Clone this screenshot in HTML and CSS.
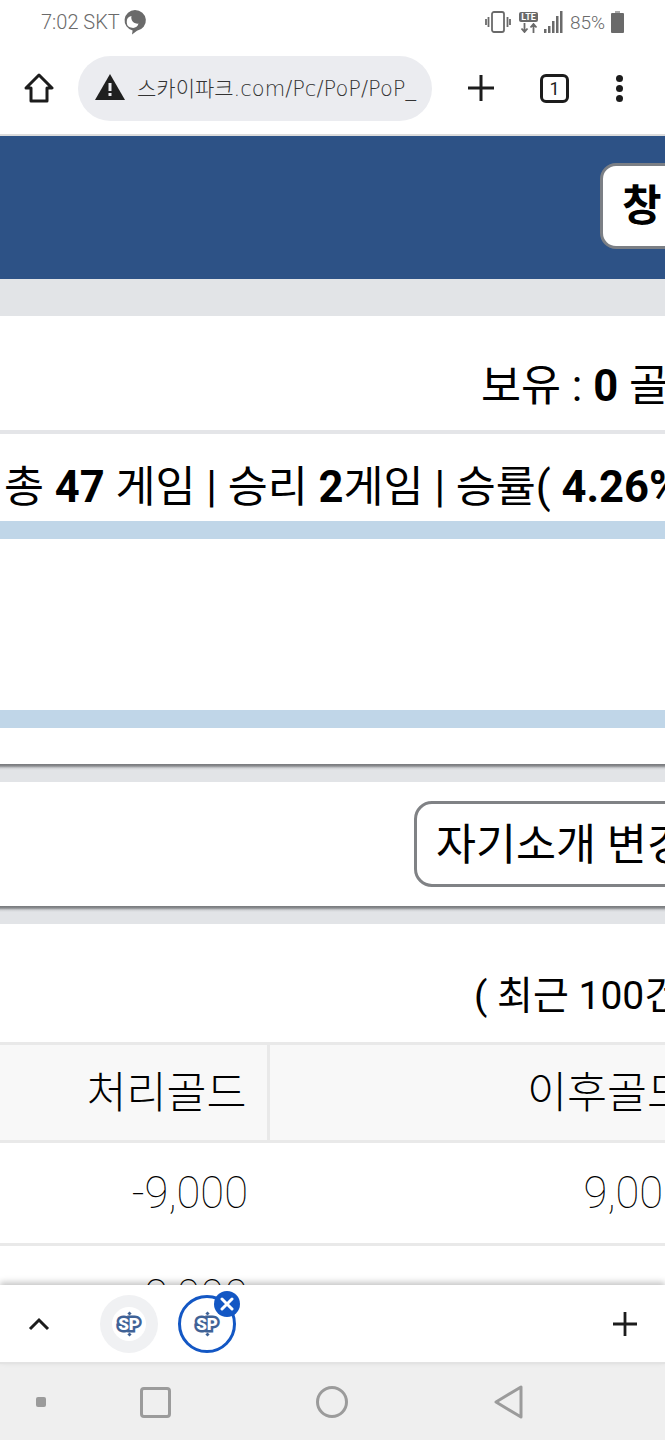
FILE: index.html
```html
<!DOCTYPE html>
<html lang="ko">
<head>
  <meta charset="UTF-8">
  <meta name="viewport" content="width=device-width, initial-scale=1.0">
  <title>스카이파크</title>
  <link rel="stylesheet" href="styles.css">
</head>
<body>

<div class="phone">
  <div class="status-bar">
    <div class="status-left">
      <span>7:02 SKT</span>
      <svg class="talk-icon" width="24" height="26" viewBox="0 0 24 26">
        <path d="M12 1a11 10.500 0 0 1 2 20.800L9 25.500l.6-3.900A11 10.500 0 0 1 12 1z" fill="#6a6a6a"/>
        <path d="M15.500 14.500a6 6 0 0 1-7-7.500 6 6 0 1 0 7 7.500z" fill="#fff"/>
      </svg>
    </div>
    <div class="status-right">
      <svg width="26" height="24" viewBox="0 0 26 24" fill="none" stroke="#6a6a6a" stroke-width="1.800">
        <rect x="7" y="2" width="12" height="20" rx="2"/>
        <path d="M3.500 7v10M1 9v6M22.500 7v10M25 9v6"/>
      </svg>
      <div class="lte">
        <span class="lte-badge">LTE</span>
        <svg width="18" height="10" viewBox="0 0 18 10" fill="none" stroke="#6a6a6a" stroke-width="1.800">
          <path d="M4.500 0v8M1.500 5.500l3 3.500 3-3.500M13.500 10V2M10.500 4.500l3-3.500 3 3.500"/>
        </svg>
      </div>
      <svg width="20" height="22" viewBox="0 0 20 22" fill="#6a6a6a">
        <rect x="0" y="18" width="2.500" height="4"/>
        <rect x="4" y="15" width="2.500" height="7"/>
        <rect x="8" y="10" width="2.500" height="12"/>
        <rect x="12" y="5" width="2.500" height="17"/>
        <rect x="16" y="0" width="2.500" height="22"/>
      </svg>
      <span class="battery-text">85%</span>
      <svg width="13" height="22" viewBox="0 0 13 22" fill="#6a6a6a">
        <rect x="4" y="0" width="5" height="2" fill="#a8a8a8"/>
        <rect x="0" y="2" width="13" height="20" rx="1"/>
      </svg>
    </div>
  </div>

  <div class="toolbar">
    <svg class="home-icon" width="30" height="30" viewBox="0 0 30 30" fill="none" stroke="#1c1c1c" stroke-width="3" stroke-linejoin="round">
      <path d="M2 15L15 2l13 13h-5v13H7V15z"/>
    </svg>
    <div class="url-pill">
      <svg width="30" height="26" viewBox="0 0 30 26">
        <path d="M15 0l15 26H0z" fill="#1f1f1f"/>
        <rect x="13.500" y="9" width="3" height="8" fill="#ebecf0"/>
        <rect x="13.500" y="19" width="3" height="3" fill="#ebecf0"/>
      </svg>
      <span class="url-text">스카이파크.com/Pc/PoP/PoP_</span>
    </div>
    <svg class="plus-icon" width="28" height="28" viewBox="0 0 28 28" stroke="#1c1c1c" stroke-width="3">
      <path d="M14 1v26M1 14h26"/>
    </svg>
    <span class="tab-count">1</span>
    <div class="dots"><i></i><i></i><i></i></div>
  </div>

  <div class="content">
    <div class="wide">
      <div class="blue-head">
        <button class="head-btn">창</button>
      </div>
      <div class="gap-band"></div>

      <div class="gold-row">보유 : <b>0</b> 골드</div>
      <div class="stats-row">총 <b>47</b> 게임 | 승리 <b>2</b>게임 | 승률( <b>4.26%</b> )</div>
      <div class="strip"></div>
      <div class="intro-empty"></div>
      <div class="strip"></div>
      <div class="intro-foot"></div>

      <div class="band-shadow"></div>
      <div class="btn-row">
        <button class="intro-btn">자기소개 변경</button>
      </div>
      <div class="band-shadow"></div>

      <div class="recent">( 최근 100건 )</div>
      <table class="gold-table">
        <tr>
          <th class="col-gold">처리골드</th>
          <th class="col-after">이후골드</th>
        </tr>
        <tr>
          <td>-9,000</td>
          <td>9,000</td>
        </tr>
        <tr>
          <td>-9,000</td>
          <td>0</td>
        </tr>
      </table>
    </div>
  </div>

  <div class="tab-strip">
    <svg class="chev" width="22" height="14" viewBox="0 0 22 14" fill="none" stroke="#1c1c1c" stroke-width="3">
      <path d="M2 12l9-9 9 9"/>
    </svg>
    <div class="tab-circle inactive">
      <span class="logo-bg"><span class="sp-logo">SP</span></span>
    </div>
    <div class="tab-circle active">
      <span class="sp-logo">SP</span>
      <span class="close-badge">
        <svg width="14" height="14" viewBox="0 0 14 14" stroke="#fff" stroke-width="3" stroke-linecap="round"><path d="M2 2l10 10M12 2L2 12"/></svg>
      </span>
    </div>
    <svg class="tab-plus" width="24" height="24" viewBox="0 0 24 24" stroke="#1c1c1c" stroke-width="2.800">
      <path d="M12 0v24M0 12h24"/>
    </svg>
  </div>

  <div class="nav-bar">
    <span class="nav-dot"></span>
    <span class="nav-square"></span>
    <span class="nav-circle"></span>
    <svg class="nav-back" width="32" height="34" viewBox="0 0 32 34" fill="none" stroke="#9b9b9b" stroke-width="3" stroke-linejoin="round">
      <path d="M28 2v30L3 17z"/>
    </svg>
  </div>
</div>

</body>
</html>
```

FILE: styles.css
```css
* {
  box-sizing: border-box;
}
body {
  margin: 0;
  background: #fff;
  color: #000;
  font-family: Roboto, "Noto Sans CJK KR", sans-serif;
}
.phone {
  width: 665px;
  height: 1440px;
  display: flex;
  flex-direction: column;
  overflow: hidden;
}

/* status bar */
.status-bar {
  height: 44px;
  flex: none;
  display: flex;
  justify-content: space-between;
  align-items: center;
  padding: 0 41px;
  color: #6a6a6a;
  font-size: 20px;
  font-weight: 300;
}
.status-left, .status-right {
  display: flex;
  align-items: center;
}
.talk-icon {
  margin-left: 3px;
}
.status-right {
  gap: 6px;
}
.battery-text {
  font-size: 19px;
}
.lte {
  display: flex;
  flex-direction: column;
  align-items: center;
  gap: 1px;
  margin-left: 2px;
}
.lte-badge {
  background: #6a6a6a;
  color: #fff;
  font-size: 9px;
  line-height: 10px;
  font-weight: 700;
  padding: 0 2px;
  border-radius: 2px;
}

/* browser toolbar */
.toolbar {
  height: 92px;
  flex: none;
  display: flex;
  align-items: center;
  padding: 0 0 2px 24px;
  border-bottom: 2px solid #dcdcdc;
}
.home-icon {
  flex: none;
}
.url-pill {
  width: 354px;
  height: 65px;
  margin-left: 24px;
  padding: 0 0 2px 17px;
  display: flex;
  align-items: center;
  gap: 12px;
  background: #ebecf0;
  border-radius: 33px;
  flex: none;
}
.url-text {
  font-family: "DejaVu Sans", "Noto Sans CJK KR", sans-serif;
  font-size: 21px;
  font-weight: 300;
  color: #333;
  white-space: nowrap;
}
.plus-icon {
  margin-left: 35px;
  flex: none;
}
.tab-count {
  width: 29px;
  height: 29px;
  margin-left: 45px;
  flex: none;
  display: flex;
  justify-content: center;
  align-items: center;
  border: 3px solid #1c1c1c;
  border-radius: 6px;
  font-size: 18px;
  color: #1c1c1c;
}
.dots {
  margin-left: 47px;
  display: flex;
  flex-direction: column;
  gap: 3px;
}
.dots i {
  width: 7px;
  height: 7px;
  border-radius: 50%;
  background: #1c1c1c;
}

/* page content, wider than the screen */
.content {
  flex: 1;
  min-height: 0;
  overflow: hidden;
}
.wide {
  width: 1000px;
}
.blue-head {
  height: 143px;
  background: #2d5286;
  padding: 27px 0 0 600px;
}
.head-btn {
  width: 200px;
  height: 86px;
  padding: 0 0 8px 19px;
  text-align: left;
  background: #fff;
  border: 3px solid #7b7f85;
  border-radius: 16px;
  font-family: inherit;
  font-size: 43px;
  font-weight: 700;
  color: #000;
}
.gap-band {
  height: 37px;
  background: #e2e4e7;
}
.gold-row {
  height: 118px;
  padding: 40px 0 0 481px;
  border-bottom: 4px solid #e4e5e8;
  font-size: 43.500px;
  line-height: 62px;
  white-space: nowrap;
}
.stats-row {
  height: 87px;
  padding: 23px 0 0 4px;
  font-size: 43.500px;
  line-height: 62px;
  white-space: nowrap;
}
.strip {
  height: 18px;
  background: #c0d6e8;
}
.intro-empty {
  height: 171px;
}
.intro-foot {
  height: 36px;
}
.band-shadow {
  height: 18px;
  background: linear-gradient(#77797c 0, #8a8c8f 2px, #cfd1d4 4px, #e2e4e7 6px);
}
.btn-row {
  height: 124px;
  padding: 19px 0 0 414px;
}
.intro-btn {
  width: 400px;
  height: 86px;
  padding: 0 0 6px 19px;
  text-align: left;
  background: #fff;
  border: 3px solid #808285;
  border-radius: 18px;
  font-family: inherit;
  font-size: 43.500px;
  color: #000;
}
.recent {
  height: 118px;
  padding: 41px 0 0 474px;
  font-size: 39px;
  line-height: 62px;
  white-space: nowrap;
}

/* gold history */
.gold-table {
  border-collapse: collapse;
  table-layout: fixed;
  width: 707px;
}
.gold-table th, .gold-table td {
  text-align: right;
  padding: 0 20px;
  border: 3px solid #e9e9e9;
  border-left: none;
  border-right: none;
  font-size: 43.500px;
  font-weight: 300;
}
.gold-table th {
  height: 98px;
  padding-bottom: 6px;
  background: #f8f8f8;
}
.gold-table td {
  height: 103px;
  font-weight: 100;
}
.gold-table th.col-gold {
  width: 268px;
  border-right: 3px solid #e9e9e9;
}

/* open tabs strip */
.tab-strip {
  height: 79px;
  flex: none;
  position: relative;
  display: flex;
  align-items: center;
  background: #fff;
  padding-left: 28px;
  box-shadow: 0 -3px 6px rgba(0, 0, 0, 0.22);
  border-bottom: 2px solid #e3e3e3;
}
.tab-circle {
  width: 58px;
  height: 58px;
  border-radius: 50%;
  display: flex;
  justify-content: center;
  align-items: center;
  position: relative;
  flex: none;
}
.tab-circle.inactive {
  margin-left: 50px;
  background: #f0f1f3;
}
.tab-circle.active {
  margin-left: 20px;
  border: 3px solid #1357c4;
}
.logo-bg {
  width: 34px;
  height: 34px;
  border-radius: 50%;
  background: #fff;
  display: flex;
  justify-content: center;
  align-items: center;
}
.sp-logo {
  position: relative;
  font-size: 17px;
  line-height: 18px;
  font-weight: 900;
  color: #fff;
  -webkit-text-stroke: 5px #3f6296;
  paint-order: stroke fill;
}
.sp-logo::before, .sp-logo::after {
  content: "";
  position: absolute;
  left: 50%;
  width: 3px;
  height: 3px;
  margin-left: -1.500px;
  background: #3f6296;
  transform: rotate(45deg);
}
.sp-logo::before {
  top: -3px;
}
.sp-logo::after {
  bottom: -3px;
}
.close-badge {
  position: absolute;
  top: -7px;
  right: -7px;
  width: 26px;
  height: 26px;
  border-radius: 50%;
  background: #1357c4;
  display: flex;
  justify-content: center;
  align-items: center;
}
.tab-plus {
  margin-left: auto;
  margin-right: 28px;
}

/* android nav */
.nav-bar {
  height: 76px;
  flex: none;
  display: flex;
  align-items: center;
  background: #efefef;
  padding-left: 36px;
}
.nav-dot {
  width: 10px;
  height: 10px;
  background: #9b9b9b;
  border-radius: 2px;
}
.nav-square {
  width: 31px;
  height: 31px;
  margin-left: 94px;
  border: 3px solid #9b9b9b;
  border-radius: 4px;
}
.nav-circle {
  width: 32px;
  height: 32px;
  margin-left: 145px;
  border: 3px solid #9b9b9b;
  border-radius: 50%;
}
.nav-back {
  margin-left: 145px;
}
```
